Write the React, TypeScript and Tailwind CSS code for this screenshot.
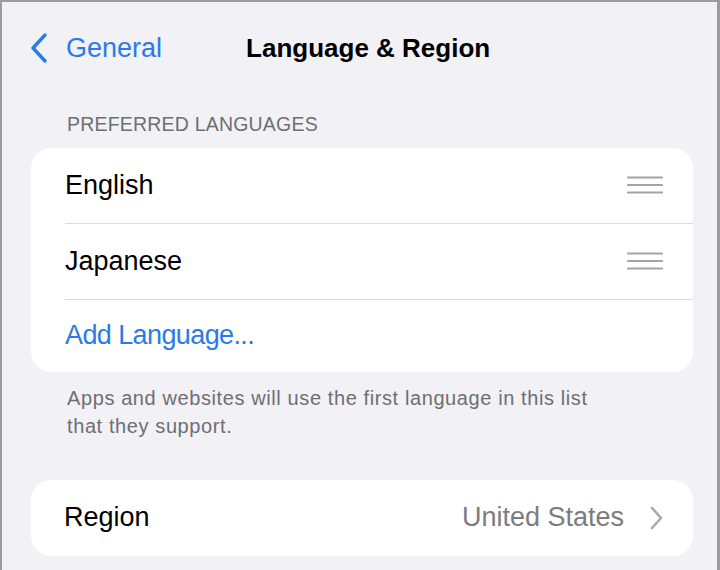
import React from "react";

const font = { fontFamily: '"Liberation Sans", Arial, sans-serif' };

function DragHandle() {
  return (
    <svg width="36" height="18" viewBox="0 0 36 18" className="shrink-0">
      <g stroke="#a3a3a6" strokeWidth="2.2" strokeLinecap="round">
        <line x1="1" y1="1.5" x2="35" y2="1.5" />
        <line x1="1" y1="9" x2="35" y2="9" />
        <line x1="1" y1="16.5" x2="35" y2="16.5" />
      </g>
    </svg>
  );
}

function LangRow({ name, last }: { name: string; last?: boolean }) {
  return (
    <div className="flex h-[76px] items-center pl-[34px]">
      <div
        className={
          "flex h-full flex-1 items-center justify-between pr-[30px] " +
          (last ? "" : "border-b border-[#dcdce0]")
        }
      >
        <span className="text-[27px] text-black">{name}</span>
        <DragHandle />
      </div>
    </div>
  );
}

export default function App() {
  return (
    <div
      style={font}
      className="h-[570px] w-[720px] overflow-hidden border-l-2 border-r-[3px] border-t-2 border-[#9c9c9f] bg-[#f1f1f6]"
    >
      <div className="flex h-[94px] items-center pb-[2px]">
        <div className="flex items-center pl-[28px]">
          <svg width="18" height="30" viewBox="0 0 18 30">
            <path
              d="M15 2 L3 15 L15 28"
              fill="none"
              stroke="#2b7be6"
              strokeWidth="3.4"
              strokeLinecap="round"
              strokeLinejoin="round"
            />
          </svg>
          <span className="ml-[18px] text-[27px] text-[#2b7be6]">General</span>
        </div>
        <h1 className="ml-[84px] text-[26px] font-bold text-black">
          Language &amp; Region
        </h1>
      </div>

      <div className="mt-[19px] pl-[65px] text-[19.5px] uppercase leading-none tracking-[0.2px] text-[#6e6e73]">
        Preferred Languages
      </div>

      <div className="mx-[29px] mt-[13px] w-[662px] rounded-[20px] bg-white">
        <LangRow name="English" />
        <LangRow name="Japanese" />
        <div className="flex h-[72px] items-center pl-[34px]">
          <span className="text-[27px] tracking-[-0.6px] text-[#2b7be6]">Add Language...</span>
        </div>
      </div>

      <p className="mt-[12px] pl-[65px] pr-[60px] text-[20px] leading-[28px] tracking-[0.6px] text-[#6e6e73]">
        Apps and websites will use the first language in this list
        <br />
        that they support.
      </p>

      <div className="mx-[29px] mt-[40px] flex h-[76px] w-[662px] items-center justify-between rounded-[20px] bg-white pl-[33px] pr-[30px]">
        <span className="text-[27px] text-black">Region</span>
        <div className="flex items-center gap-[26px]">
          <span className="text-[27px] text-[#7c7c80]">United States</span>
          <svg width="13" height="24" viewBox="0 0 13 24">
            <path
              d="M2 2 L11 12 L2 22"
              fill="none"
              stroke="#a9a9ae"
              strokeWidth="2.6"
              strokeLinecap="round"
              strokeLinejoin="round"
            />
          </svg>
        </div>
      </div>
    </div>
  );
}
